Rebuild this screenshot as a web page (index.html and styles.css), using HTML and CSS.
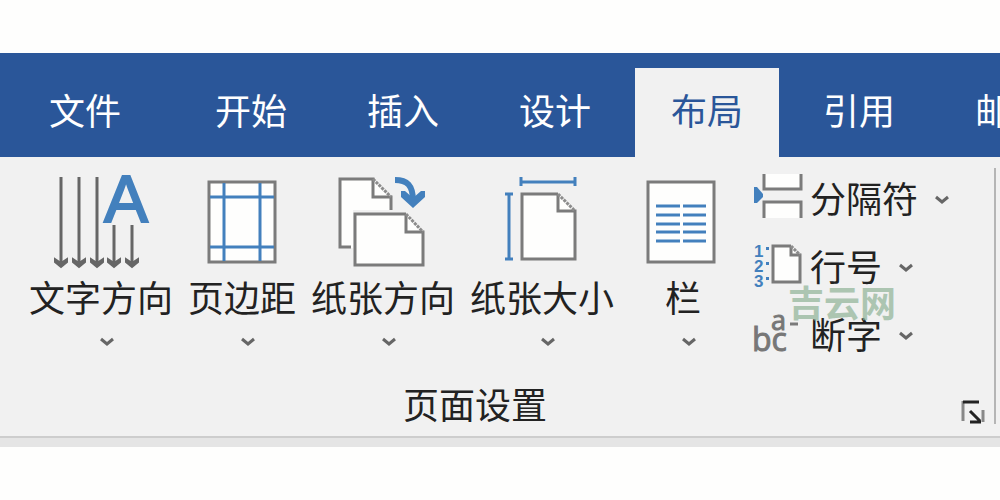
FILE: index.html
```
<!DOCTYPE html>
<html lang="zh-CN">
<head>
    <meta charset="UTF-8">
    <meta name="viewport" content="width=device-width, initial-scale=1.0">
    <title>页面设置</title>
    <link rel="stylesheet" href="styles.css">
</head>
<body>
<nav class="tabs">
    <button class="tab tab-file">文件</button>
    <button class="tab">开始</button>
    <button class="tab">插入</button>
    <button class="tab">设计</button>
    <button class="tab active">布局</button>
    <button class="tab">引用</button>
    <button class="tab">邮件</button>
</nav>

<main class="ribbon">
    <section class="group">
        <div class="tools">
            <button class="tool">
                <svg class="icon" viewBox="0 0 100 100">
                    <g class="dark">
                        <path d="M10 5V94M28 5V94M46 5V94M63 53V94M81 53V94"/>
                        <path class="heads" d="M4 87v3l6 5l6-5v-3l-6 4zM22 87v3l6 5l6-5v-3l-6 4zM40 87v3l6 5l6-5v-3l-6 4zM57 87v3l6 5l6-5v-3l-6 4zM75 87v3l6 5l6-5v-3l-6 4z"/>
                    </g>
                    <text class="letter-a" x="75" y="50">A</text>
                </svg>
                <span>文字方向</span>
                <svg class="arrow" viewBox="0 0 16 10"><path d="M2 2l6 5l6-5"/></svg>
            </button>
            <button class="tool">
                <svg class="icon" viewBox="0 0 100 100">
                    <rect class="page" x="17" y="10" width="66" height="80"/>
                    <path class="blue" d="M32 11V89M68 11V89M18 25H82M18 75H82"/>
                </svg>
                <span>页边距</span>
                <svg class="arrow" viewBox="0 0 16 10"><path d="M2 2l6 5l6-5"/></svg>
            </button>
            <button class="tool">
                <svg class="icon" viewBox="0 0 100 100">
                    <path class="fill" d="M7 7H40L58 25V38H20V76H7Z"/>
                    <path class="outline" d="M18 75H7V7H40V25H58V38"/>
                    <path class="fold" d="M40 7L58 25"/>
                    <path class="fill" d="M22 42H73L90 60V93H22Z"/>
                    <path class="outline" d="M73 42H22V93H90V60H73V42"/>
                    <path class="fold" d="M73 42L90 60"/>
                    <path class="turn" d="M62 8C74 8 80 13 80 29"/>
                    <path class="turn-head" d="M68 19L72 19L80 26L88 19L92 19V25L80 36L68 25Z"/>
                </svg>
                <span>纸张方向</span>
                <svg class="arrow" viewBox="0 0 16 10"><path d="M2 2l6 5l6-5"/></svg>
            </button>
            <button class="tool">
                <svg class="icon" viewBox="0 0 100 100">
                    <path class="blue" d="M29 10H83M29 5V14M83 5V14M17 22V87M13 22H21M13 87H21"/>
                    <path class="fill" d="M30 22H66L83 39V87H30Z"/>
                    <path class="outline" d="M66 22H30V87H83V39H66V22"/>
                    <path class="fold" d="M66 22L83 39"/>
                </svg>
                <span>纸张大小</span>
                <svg class="arrow" viewBox="0 0 16 10"><path d="M2 2l6 5l6-5"/></svg>
            </button>
            <button class="tool tool-columns">
                <svg class="icon" viewBox="0 0 100 100">
                    <rect class="page" x="15" y="10" width="66" height="80"/>
                    <path class="blue" d="M23 34H47M50 34H73M23 43H47M50 43H73M23 52H47M50 52H73M23 60H47M50 60H73M23 69H47M50 69H73"/>
                </svg>
                <span>栏</span>
                <svg class="arrow" viewBox="0 0 16 10"><path d="M2 2l6 5l6-5"/></svg>
            </button>

            <div class="small-tools">
                <button class="small-tool">
                    <svg class="small-icon" viewBox="0 0 48 56">
                        <path class="fill" d="M11 2H46V17H11ZM11 30H46V46H11Z"/>
                        <path class="outline" d="M10 2V17H47V2M10 46V30H47V46"/>
                        <path class="marker" d="M0 15H3L9 22V25L3 31H0Z"/>
                    </svg>
                    <span>分隔符</span>
                    <svg class="arrow" viewBox="0 0 16 10"><path d="M2 2l6 5l6-5"/></svg>
                </button>
                <button class="small-tool">
                    <svg class="small-icon" viewBox="0 0 48 56">
                        <g class="digits">
                            <text x="0" y="17">1</text>
                            <text x="0" y="32">2</text>
                            <text x="0" y="47">3</text>
                        </g>
                        <path class="marker" d="M12 7h3v3h-3ZM12 22h3v3h-3ZM12 37h3v3h-3Z"/>
                        <path class="fill" d="M19 6H37L46 15V42H19Z"/>
                        <path class="outline" d="M37 6H19V42H46V15H37V6"/>
                        <path class="fold" d="M37 6L46 15"/>
                    </svg>
                    <span>行号</span>
                    <svg class="arrow" viewBox="0 0 16 10"><path d="M2 2l6 5l6-5"/></svg>
                </button>
                <button class="small-tool">
                    <svg class="small-icon" viewBox="0 0 48 56">
                        <text class="letters" x="-2" y="43">bc</text>
                        <text class="letters letters-top" x="17" y="22">a</text>
                        <path class="outline" d="M36 16H44"/>
                    </svg>
                    <span>断字</span>
                    <svg class="arrow" viewBox="0 0 16 10"><path d="M2 2l6 5l6-5"/></svg>
                </button>
                <span class="watermark">吉云网</span>
            </div>
        </div>

        <div class="group-footer">
            <span class="group-name">页面设置</span>
            <button class="launcher" aria-label="页面设置">
                <svg viewBox="0 0 24 24">
                    <path class="launcher-side" d="M2 21V1M22 10V22"/>
                    <path d="M2 2H18M9 11L19 21M9 22H20"/>
                </svg>
            </button>
        </div>
    </section>
</main>
<div class="ribbon-edge"></div>
</body>
</html>
```

FILE: styles.css
```
body {
    font-family: "Noto Sans CJK SC", sans-serif;
    font-size: 36px;
    line-height: 36px;
    background: #fefefd;
    color: #222;
    margin: 0;
    padding-top: 53px;
}
button {
    font: inherit;
    color: inherit;
    background: none;
    border: none;
    padding: 0;
    white-space: nowrap;
    cursor: pointer;
}
svg {
    display: block;
    flex-shrink: 0;
    fill: none;
    stroke-width: 3px;
}

/* Tabs */
.tabs {
    display: flex;
    gap: 8px;
    padding: 15px 0 0 13px;
    background: #2a5699;
    color: white;
    overflow: hidden;
}
.tab {
    flex-shrink: 0;
    padding: 23px 36px 30px;
}
.tab-file {
    margin-right: 14px;
}
.tab.active {
    background: #f1f1f1;
    color: #2a5699;
}

/* Ribbon */
.ribbon {
    background: #f1f1f1;
    padding: 11px 4px 12px 0;
    border-bottom: 2px solid #cdcdcd;
}
.ribbon-edge {
    height: 9px;
    background: #e5e5e5;
}
.group {
    border-right: 2px solid #b5b5b5;
}
.tools {
    display: flex;
    gap: 15px;
    padding: 4px 0 0 29px;
}
.tool {
    display: flex;
    flex-direction: column;
    align-items: center;
}
.tool .arrow {
    margin: 23px 0 0 12px;
}
.tool-columns {
    width: 108px;
}
.icon {
    width: 100px;
    height: 100px;
    margin-bottom: 6px;
}
.arrow {
    width: 16px;
    height: 10px;
    stroke: #666;
}
.small-tools {
    position: relative;
    display: flex;
    flex-direction: column;
    align-items: flex-start;
    gap: 12px;
    padding-left: 2px;
}
.small-tool {
    display: flex;
    align-items: center;
    gap: 8px;
}
.small-tool span {
    padding-bottom: 6px;
}
.small-tool .arrow {
    margin-left: 8px;
}
.small-icon {
    width: 48px;
    height: 56px;
    overflow: visible;
}
.watermark {
    position: absolute;
    left: 36px;
    top: 111px;
    color: #8fb397;
    font-weight: bold;
    opacity: 0.7;
    pointer-events: none;
}
.group-footer {
    display: flex;
    align-items: center;
    padding-right: 9px;
    margin-top: 20px;
}
.group-name {
    flex: 1;
    padding-bottom: 2px;
    text-align: center;
}
.launcher {
    width: 24px;
    height: 24px;
    margin: 16px 0 0 11px;
    stroke: #222;
}
.launcher-side {
    stroke: #888;
}

/* Icon parts */
.dark {
    stroke: #666;
}
.heads {
    fill: #666;
    stroke-width: 2px;
}
.blue {
    stroke: #4380bd;
}
.page {
    fill: #fefefd;
    stroke: #7b7b7b;
}
.fill {
    fill: #fefefd;
}
.outline {
    stroke: #7b7b7b;
}
.fold {
    stroke: #8c8c8c;
    stroke-dasharray: 3 1;
}
.turn {
    stroke: #4380bd;
    stroke-width: 6px;
}
.turn-head,
.marker {
    fill: #4380bd;
}
.letter-a {
    font: 66px "Liberation Sans", sans-serif;
    fill: #4380bd;
    stroke: #4380bd;
    stroke-width: 2px;
    text-anchor: middle;
}
.digits {
    font: bold 17px "Liberation Sans", sans-serif;
    fill: #4380bd;
}
.letters {
    font: 32px "Open Sans", sans-serif;
    fill: #777;
    stroke: #777;
    stroke-width: 1px;
}
.letters-top {
    font-size: 27px;
}
```
